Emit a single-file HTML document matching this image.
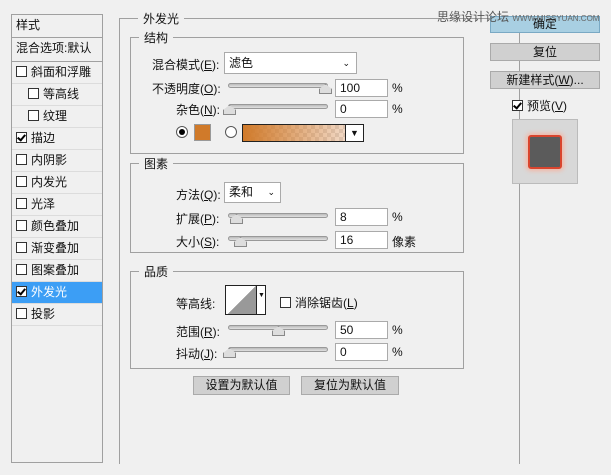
<!DOCTYPE html>
<html><head><meta charset="utf-8"><style>
*{margin:0;padding:0;box-sizing:border-box}
body{width:611px;height:475px;background:#f0f0f0;font-family:"Liberation Sans","Noto Sans CJK SC",sans-serif;font-size:12px;color:#111;position:relative;overflow:hidden}
.a{position:absolute;white-space:nowrap}
.row{position:absolute;left:12px;width:90px;height:22px;border-bottom:1px solid #dcdcdc;line-height:21px;padding-left:4px}
.cb{display:inline-block;width:11px;height:11px;border:1px solid #333;background:#fff;vertical-align:-1px;margin-right:4px;position:relative}
.cb.on::after{content:"";position:absolute;left:2px;top:0px;width:3px;height:6px;border:solid #000;border-width:0 2px 2px 0;transform:rotate(40deg)}
.grp{position:absolute;border:1px solid #a0a0a0}
.lg{position:absolute;background:#f0f0f0;padding:0 5px;top:-9px;left:8px}
.inp{position:absolute;background:#fff;border:1px solid #aaa;height:18px;line-height:16px;padding-left:4px}
.tr{position:absolute;height:5px;border:1px solid #999;border-radius:3px;background:linear-gradient(#bbb,#e0e0e0)}
.th{position:absolute;width:0;height:0}
.th::before{content:"";position:absolute;left:-6px;top:0;width:11px;height:8px;background:#ddd;border:1px solid #888;clip-path:polygon(50% 0,100% 50%,100% 100%,0 100%,0 50%);}
.btn{position:absolute;background:#d0d0d0;border:1px solid #aaa;text-align:center;line-height:16px}
</style></head><body>
<!-- left panel -->
<div class="a" style="left:11px;top:14px;width:92px;height:449px;border:1px solid #a0a0a0;background:#f0f0f0"></div>
<div class="row" style="top:15px;height:23px;border-bottom:1px solid #a0a0a0;left:12px">样式</div>
<div class="row" style="top:38px;height:24px;border-bottom:1px solid #a0a0a0;left:12px">混合选项:默认</div>
<div class="row" style="top:62px"><span class="cb"></span>斜面和浮雕</div>
<div class="row" style="top:84px;padding-left:16px"><span class="cb"></span>等高线</div>
<div class="row" style="top:106px;padding-left:16px"><span class="cb"></span>纹理</div>
<div class="row" style="top:128px"><span class="cb on"></span>描边</div>
<div class="row" style="top:150px"><span class="cb"></span>内阴影</div>
<div class="row" style="top:172px"><span class="cb"></span>内发光</div>
<div class="row" style="top:194px"><span class="cb"></span>光泽</div>
<div class="row" style="top:216px"><span class="cb"></span>颜色叠加</div>
<div class="row" style="top:238px"><span class="cb"></span>渐变叠加</div>
<div class="row" style="top:260px"><span class="cb"></span>图案叠加</div>
<div class="row" style="top:282px;background:#3c9ef5;color:#fff"><span class="cb on"></span>外发光</div>
<div class="row" style="top:304px"><span class="cb"></span>投影</div>

<!-- main group -->
<div class="grp" style="left:119px;top:18px;width:401px;height:446px;border-bottom:none"><span class="lg" style="left:18px">外发光</span></div>

<div class="grp" style="left:130px;top:37px;width:334px;height:117px"><span class="lg">结构</span></div>
<div class="a" style="left:152px;top:56px">混合模式(<u>E</u>):</div>
<div class="inp" style="left:224px;top:52px;width:133px;height:22px;line-height:20px">滤色<span style="position:absolute;right:6px;top:0;font-size:9px">⌄</span></div>
<div class="a" style="left:152px;top:80px">不透明度(<u>O</u>):</div>
<div class="tr" style="left:228px;top:83px;width:100px"></div><div class="th" style="left:325px;top:84px"></div>
<div class="inp" style="left:335px;top:79px;width:53px">100</div><div class="a" style="left:392px;top:81px">%</div>
<div class="a" style="left:176px;top:101px">杂色(<u>N</u>):</div>
<div class="tr" style="left:228px;top:104px;width:100px"></div><div class="th" style="left:229px;top:105px"></div>
<div class="inp" style="left:335px;top:100px;width:53px">0</div><div class="a" style="left:392px;top:102px">%</div>
<div class="a" style="left:176px;top:126px;width:12px;height:12px;border:1px solid #555;border-radius:50%;background:#fff"><div style="position:absolute;left:2px;top:2px;width:6px;height:6px;border-radius:50%;background:#000"></div></div>
<div class="a" style="left:194px;top:124px;width:17px;height:17px;background:#d07a2a;border:1px solid #999"></div>
<div class="a" style="left:225px;top:126px;width:12px;height:12px;border:1px solid #555;border-radius:50%;background:#fff"></div>
<div class="a" style="left:242px;top:124px;width:122px;height:18px;border:1px solid #222;background:linear-gradient(90deg,#d07a2a,rgba(230,180,150,.3)),repeating-conic-gradient(#ddd 0 25%,#fff 0 50%) 0 0/8px 8px"></div>
<div class="a" style="left:345px;top:124px;width:19px;height:18px;border:1px solid #222;background:#fff;text-align:center;font-size:9px;line-height:16px">▼</div>

<div class="grp" style="left:130px;top:163px;width:334px;height:90px"><span class="lg">图素</span></div>
<div class="a" style="left:176px;top:186px">方法(<u>Q</u>):</div>
<div class="inp" style="left:224px;top:182px;width:57px;height:21px;line-height:19px">柔和<span style="position:absolute;right:5px;font-size:9px">⌄</span></div>
<div class="a" style="left:176px;top:210px">扩展(<u>P</u>):</div>
<div class="tr" style="left:228px;top:213px;width:100px"></div><div class="th" style="left:236px;top:214px"></div>
<div class="inp" style="left:335px;top:208px;width:53px">8</div><div class="a" style="left:392px;top:210px">%</div>
<div class="a" style="left:176px;top:233px">大小(<u>S</u>):</div>
<div class="tr" style="left:228px;top:236px;width:100px"></div><div class="th" style="left:240px;top:237px"></div>
<div class="inp" style="left:335px;top:231px;width:53px">16</div><div class="a" style="left:392px;top:233px">像素</div>

<div class="grp" style="left:130px;top:271px;width:334px;height:98px"><span class="lg">品质</span></div>
<div class="a" style="left:176px;top:295px">等高线:</div>
<div class="a" style="left:225px;top:285px;width:41px;height:30px;border:1px solid #222;background:#fff;overflow:hidden"><div style="position:absolute;left:0;top:0;width:30px;height:30px;background:linear-gradient(to bottom right,#fff 50%,#999 50%)"></div><div style="position:absolute;left:30px;top:0;width:1px;height:30px;background:#222"></div><span style="position:absolute;left:32px;top:6px;font-size:7px">▼</span></div>
<div class="a" style="left:280px;top:294px"><span class="cb"></span>消除锯齿(<u>L</u>)</div>
<div class="a" style="left:176px;top:323px">范围(<u>R</u>):</div>
<div class="tr" style="left:228px;top:325px;width:100px"></div><div class="th" style="left:278px;top:326px"></div>
<div class="inp" style="left:335px;top:321px;width:53px">50</div><div class="a" style="left:392px;top:323px">%</div>
<div class="a" style="left:176px;top:345px">抖动(<u>J</u>):</div>
<div class="tr" style="left:228px;top:347px;width:100px"></div><div class="th" style="left:229px;top:348px"></div>
<div class="inp" style="left:335px;top:343px;width:53px">0</div><div class="a" style="left:392px;top:345px">%</div>

<div class="btn" style="left:193px;top:376px;width:97px;height:19px">设置为默认值</div>
<div class="btn" style="left:301px;top:376px;width:98px;height:19px">复位为默认值</div>

<!-- right side -->
<div class="btn" style="left:490px;top:16px;width:110px;height:17px;background:#a8cfe2;border-color:#7aa9c4;line-height:15px">确定</div>
<div class="a" style="left:437px;top:8px;color:#555;z-index:5">思缘设计论坛 <span style="font-size:8px;color:#666">WWW.MISSYUAN.COM</span></div>
<div class="btn" style="left:490px;top:43px;width:110px;height:18px">复位</div>
<div class="btn" style="left:490px;top:71px;width:110px;height:18px">新建样式(<u>W</u>)...</div>
<div class="a" style="left:512px;top:97px"><span class="cb on"></span>预览(<u>V</u>)</div>
<div class="a" style="left:512px;top:119px;width:66px;height:65px;background:#d8d8d8;border:1px solid #bbb"><div style="position:absolute;left:15px;top:15px;width:34px;height:34px;background:#5b5b5b;border:2px solid #d9452e;border-radius:3px;box-shadow:0 0 4px 2px #f3b7a6"></div></div>
</body></html>
